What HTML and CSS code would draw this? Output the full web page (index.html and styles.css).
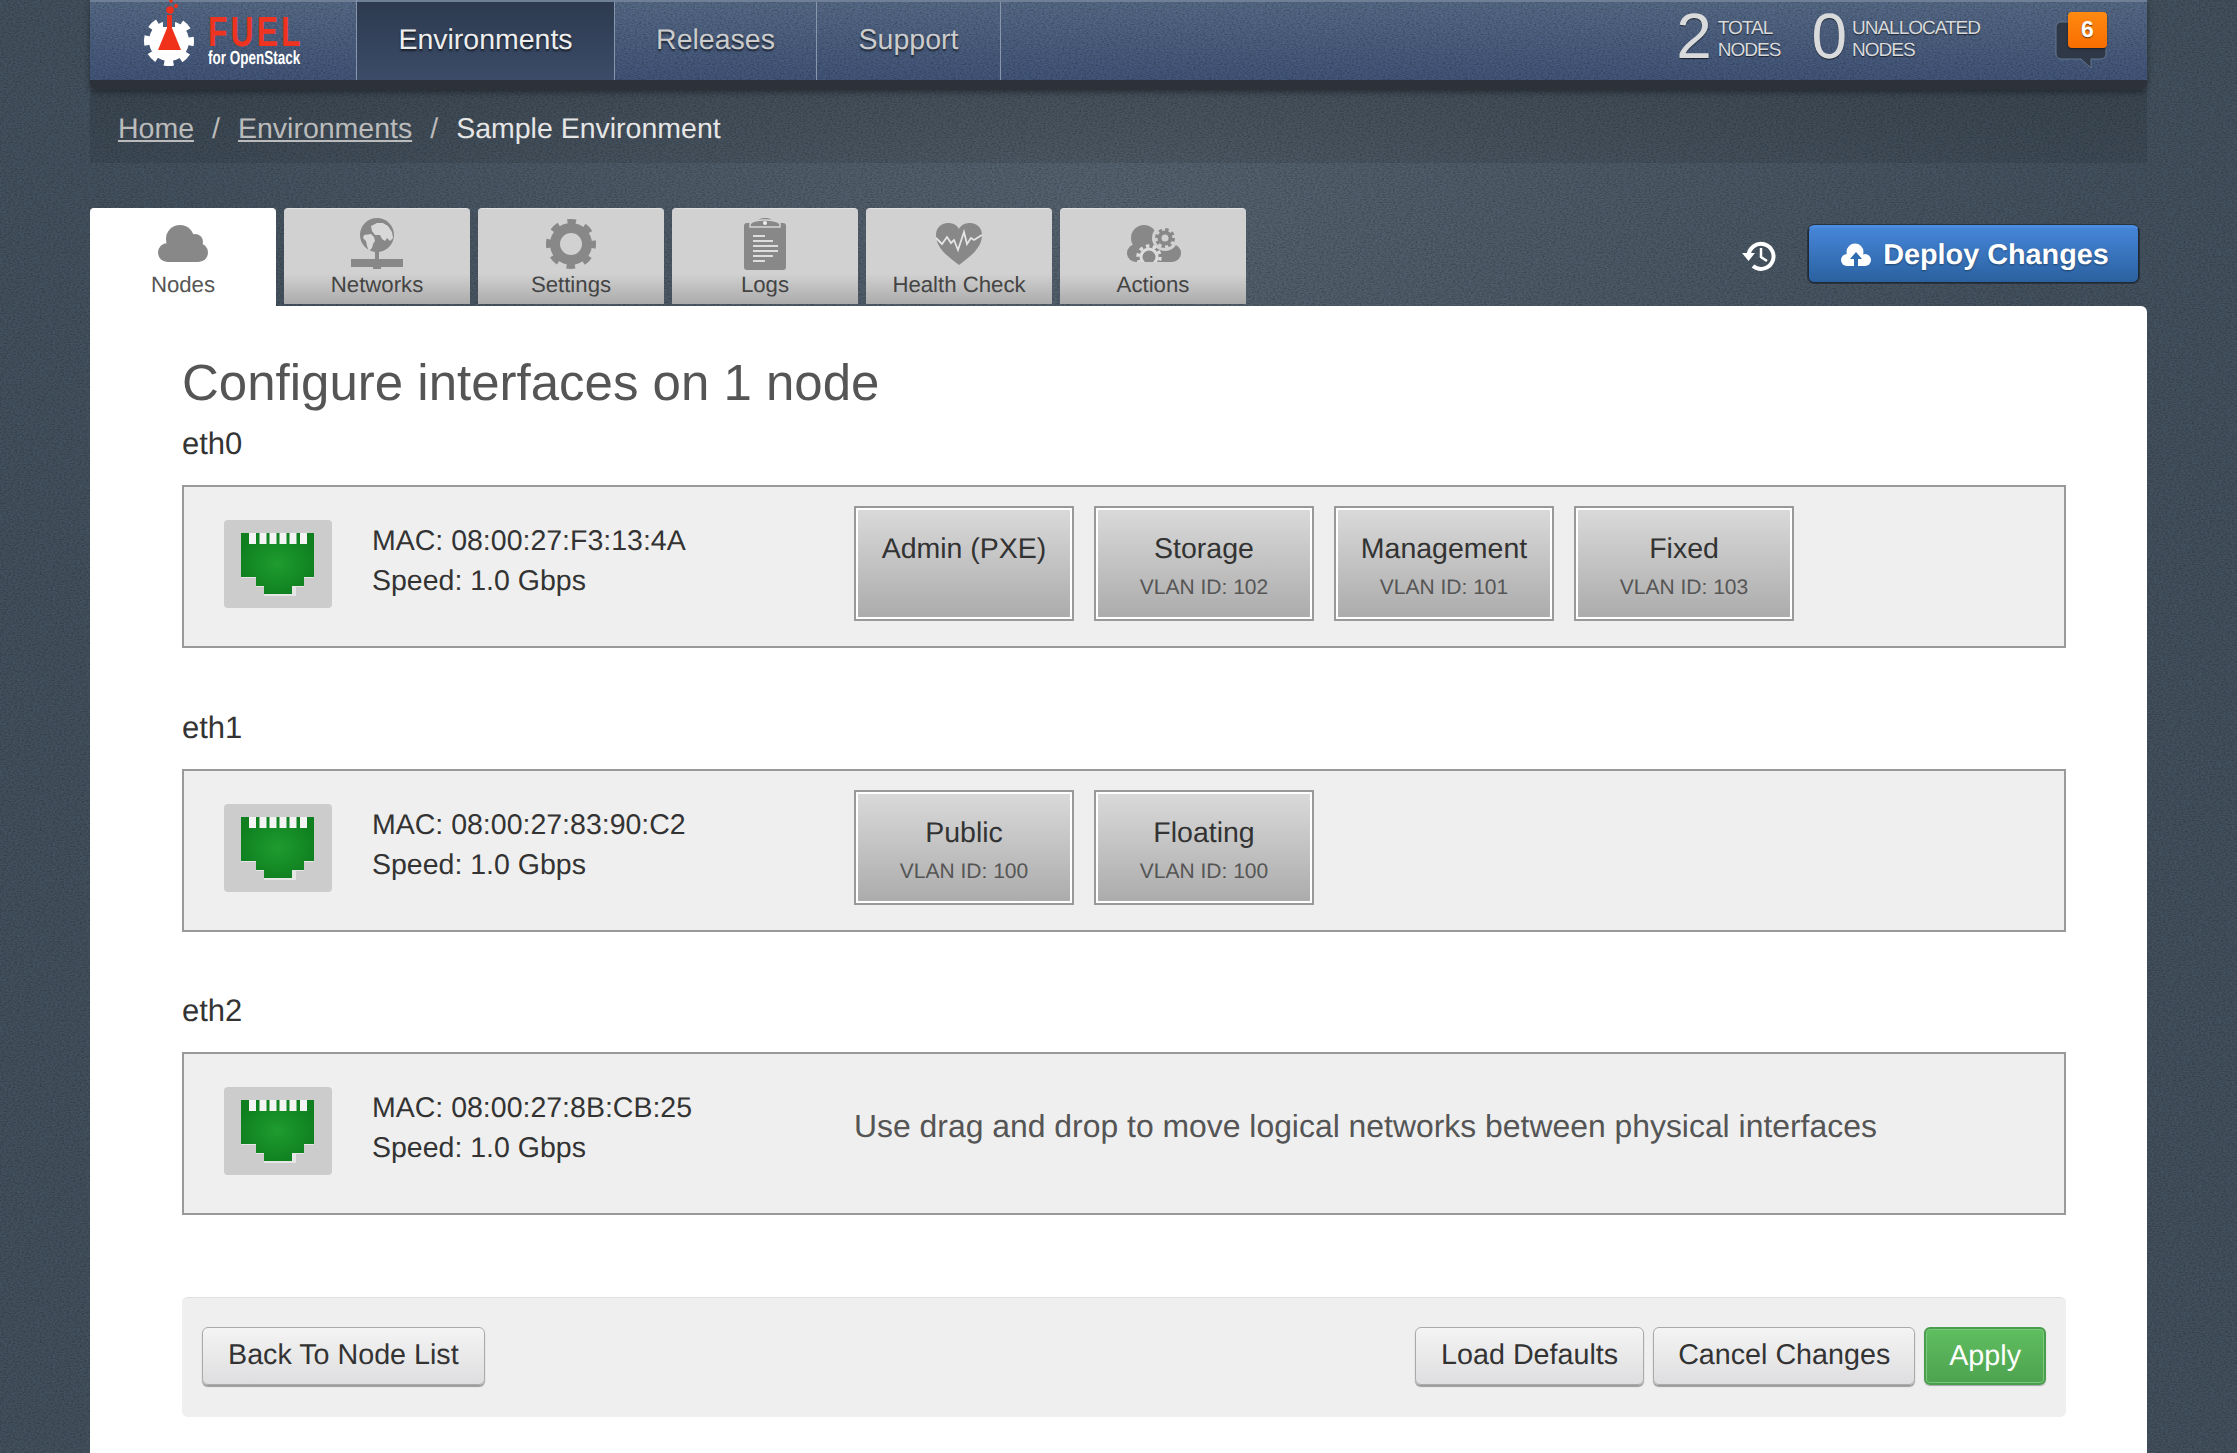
FILE: index.html
```html
<!DOCTYPE html>
<html>
<head>
    <meta charset="utf-8">
    <title>Fuel for OpenStack</title>
    <link rel="stylesheet" href="styles.css">
</head>
<body>
<div id="page">
    <div id="navbar">
        <div class="brand">
            <svg class="brand-gear" width="56" height="66" viewBox="0 0 56 66">
                <circle cx="28" cy="41" r="20" fill="#fff"/>
                <circle cx="28" cy="41" r="21" fill="none" stroke="#fff" stroke-width="8" stroke-dasharray="9 7.490" stroke-dashoffset="4.500"/>
                <path d="M22 16h12v11h-12z" fill="#4d6180"/>
                <path d="M26 15h5v13l9 22H17l9-22z" fill="#f0321a"/>
                <circle cx="29" cy="10" r="3.800" fill="#f0321a"/>
                <circle cx="35" cy="6" r="2" fill="#f0321a"/>
                <circle cx="30" cy="1" r="1.800" fill="#f0321a"/>
            </svg>
            <div class="brand-text">
                <div class="brand-fuel">FUEL</div>
                <div class="brand-sub">for OpenStack</div>
            </div>
        </div>
        <a class="nav-item active nav-env">Environments</a>
        <a class="nav-item nav-rel">Releases</a>
        <a class="nav-item nav-sup">Support</a>
        <div class="stats">
            <div class="stat">
                <span class="stat-num">2</span>
                <span class="stat-label">TOTAL<br>NODES</span>
            </div>
            <div class="stat stat-free">
                <span class="stat-num">0</span>
                <span class="stat-label">UNALLOCATED<br>NODES</span>
            </div>
            <div class="notify">
                <svg width="54" height="50" viewBox="0 0 54 50">
                    <path d="M6 1h40a5 5 0 0 1 5 5v27a5 5 0 0 1-5 5H36v9L26 38H6a5 5 0 0 1-5-5V6a5 5 0 0 1 5-5z" fill="#2e3846" stroke="#64768e" stroke-width="1"/>
                </svg>
                <span class="badge">6</span>
            </div>
        </div>
    </div>

    <div id="breadcrumb">
        <a>Home</a><span class="sep">/</span><a>Environments</a><span class="sep">/</span><span class="here">Sample Environment</span>
    </div>

    <div id="tabs">
        <div class="tab active">
            <svg width="60" height="52" viewBox="0 0 60 52">
                <g fill="#888">
                    <circle cx="27" cy="21" r="14"/>
                    <circle cx="42" cy="24" r="8"/>
                    <circle cx="14.500" cy="34.500" r="9.500"/>
                    <circle cx="45.500" cy="34.500" r="9.500"/>
                    <rect x="14" y="26" width="32" height="18"/>
                </g>
            </svg>
            <span>Nodes</span>
        </div>
        <div class="tab">
            <svg width="60" height="52" viewBox="0 0 60 52">
                <circle cx="30" cy="17" r="17" fill="#888"/>
                <path d="M24 8l6-3h6l5 3 4 6 1 6-3 3-3-3-2 3-3-2-2-4h-5l-3-4z" fill="#d8d8d8"/>
                <path d="M17 17l7-1 3 3 1 4-2 3-1 4-3 3-2-5-1-5-3-3z" fill="#d8d8d8"/>
                <path d="M28 33h4v10h-4z" fill="#888"/>
                <path d="M4 41h52v8H34v2h-8v-2H4z" fill="#888"/>
            </svg>
            <span>Networks</span>
        </div>
        <div class="tab">
            <svg width="60" height="52" viewBox="0 0 60 52">
                <circle cx="30" cy="26" r="16" fill="none" stroke="#888" stroke-width="10"/>
                <circle cx="30" cy="26" r="22" fill="none" stroke="#888" stroke-width="6" stroke-dasharray="8.500 8.780" stroke-dashoffset="4.250"/>
            </svg>
            <span>Settings</span>
        </div>
        <div class="tab">
            <svg width="60" height="52" viewBox="0 0 60 52">
                <path d="M12 5h9c1-3 4-5 9-5s8 2 9 5h9a3 3 0 0 1 3 3v41a3 3 0 0 1-3 3H12a3 3 0 0 1-3-3V8a3 3 0 0 1 3-3z" fill="#888"/>
                <path d="M15 6c2-3 7-4 15-4s13 1 15 4v3H15z" fill="#888" stroke="#d4d4d4" stroke-width="1.500"/>
                <circle cx="30" cy="5" r="2" fill="#eee"/>
                <path d="M18 18h12M18 23h20M18 28h25M18 33h25M18 38h20M18 43h12" stroke="#ddd" stroke-width="2.200" fill="none"/>
            </svg>
            <span>Logs</span>
        </div>
        <div class="tab">
            <svg width="60" height="52" viewBox="0 0 60 52">
                <path d="M30 47C15 36 7 28 7 17 7 9 13 5 19 5c5 0 9 2 11 6 2-4 6-6 11-6 6 0 12 4 12 12 0 11-8 19-23 30z" fill="#888"/>
                <path d="M7 20l6 6 5-7 4 6 3-3 4 10 6-18 3 12 4-6 3 2 8-5" fill="none" stroke="#e4e4e4" stroke-width="1.800"/>
            </svg>
            <span>Health Check</span>
        </div>
        <div class="tab">
            <svg width="60" height="52" viewBox="0 0 60 52">
                <g fill="#888">
                    <circle cx="21" cy="20" r="13"/>
                    <circle cx="42" cy="27" r="9"/>
                    <circle cx="13" cy="35" r="9"/>
                    <circle cx="49" cy="35" r="9"/>
                    <rect x="13" y="26" width="36" height="18"/>
                </g>
                <circle cx="42" cy="20" r="13" fill="#d1d1d1"/>
                <circle cx="42" cy="20" r="8" fill="none" stroke="#888" stroke-width="4" stroke-dasharray="3.200 3.080"/>
                <circle cx="42" cy="20" r="5.500" fill="none" stroke="#888" stroke-width="4"/>
                <circle cx="26" cy="39" r="8" fill="none" stroke="#dcdcdc" stroke-width="3"/>
                <circle cx="26" cy="39" r="11" fill="none" stroke="#dcdcdc" stroke-width="3.500" stroke-dasharray="3.500 3.410"/>
                <rect x="8" y="44" width="46" height="8" fill="#d1d1d1"/>
            </svg>
            <span>Actions</span>
        </div>
        <div class="tab-tools">
            <svg class="history" width="36" height="32" viewBox="0 0 36 32">
                <path d="M7.500 16a12.500 12.500 0 1 1 4.500 10" fill="none" stroke="#fff" stroke-width="4"/>
                <path d="M1 13h13l-6.500 8z" fill="#fff"/>
                <path d="M20 8v9l6 4" fill="none" stroke="#fff" stroke-width="2.500"/>
            </svg>
            <a class="deploy">
                <svg width="30" height="24" viewBox="0 0 30 24">
                    <g fill="#fff">
                        <circle cx="14" cy="9" r="8.500"/>
                        <circle cx="24" cy="17" r="6"/>
                        <circle cx="6" cy="17" r="6"/>
                        <rect x="6" y="12" width="18" height="11"/>
                    </g>
                    <path d="M15 9l6 7h-4v7h-4v-7H9z" fill="#2f6cb0"/>
                </svg>
                Deploy Changes
            </a>
        </div>
    </div>

    <div id="panel">
        <h1>Configure interfaces on 1 node</h1>

        <div class="iface-name">eth0</div>
        <div class="iface">
            <div class="port">
                <svg width="108" height="88" viewBox="0 0 108 88"><use href="#rj45"/></svg>
            </div>
            <div class="iface-info">MAC: 08:00:27:F3:13:4A<br>Speed: 1.0 Gbps</div>
            <div class="chips">
                <div class="chip"><div class="chip-name">Admin (PXE)</div></div>
                <div class="chip"><div class="chip-name">Storage</div><div class="chip-vlan">VLAN ID: 102</div></div>
                <div class="chip"><div class="chip-name">Management</div><div class="chip-vlan">VLAN ID: 101</div></div>
                <div class="chip"><div class="chip-name">Fixed</div><div class="chip-vlan">VLAN ID: 103</div></div>
            </div>
        </div>

        <div class="iface-name">eth1</div>
        <div class="iface">
            <div class="port">
                <svg width="108" height="88" viewBox="0 0 108 88"><use href="#rj45"/></svg>
            </div>
            <div class="iface-info">MAC: 08:00:27:83:90:C2<br>Speed: 1.0 Gbps</div>
            <div class="chips">
                <div class="chip"><div class="chip-name">Public</div><div class="chip-vlan">VLAN ID: 100</div></div>
                <div class="chip"><div class="chip-name">Floating</div><div class="chip-vlan">VLAN ID: 100</div></div>
            </div>
        </div>

        <div class="iface-name">eth2</div>
        <div class="iface">
            <div class="port">
                <svg width="108" height="88" viewBox="0 0 108 88"><use href="#rj45"/></svg>
            </div>
            <div class="iface-info">MAC: 08:00:27:8B:CB:25<br>Speed: 1.0 Gbps</div>
            <div class="hint">Use drag and drop to move logical networks between physical interfaces</div>
        </div>

        <div class="page-controls">
            <a class="btn">Back To Node List</a>
            <div class="controls-right">
                <a class="btn">Load Defaults</a>
                <a class="btn btn-cancel">Cancel Changes</a>
                <a class="btn btn-apply">Apply</a>
            </div>
        </div>
    </div>
</div>

<svg class="defs" width="0" height="0">
    <defs>
        <radialGradient id="rjgreen" cx="50%" cy="50%" r="55%">
            <stop offset="0" stop-color="#1e9c2e"/>
            <stop offset="1" stop-color="#0f7f20"/>
        </radialGradient>
        <g id="rj45">
            <path d="M17 14h73v44h-10v9H72v9H40v-9H32v-9H17z" fill="#e6e6e6"/>
            <path d="M17 13h73v44h-10v9H68v8H40v-8H32v-9H17z" fill="url(#rjgreen)"/>
            <path d="M25 13h7v11h-7zM35.500 13h7v11h-7zM45.500 13h7v11h-7zM55.500 13h7v11h-7zM65.500 13h7v11h-7zM76 13h7v11h-7z" fill="#f4f4f4"/>
        </g>
    </defs>
</svg>
</body>
</html>
```

FILE: styles.css
```css
:root {
    --noise: url("data:image/svg+xml,%3Csvg xmlns='http://www.w3.org/2000/svg' width='256' height='256'%3E%3Cfilter id='n'%3E%3CfeTurbulence type='fractalNoise' baseFrequency='.45 .8' numOctaves='2' seed='4' stitchTiles='stitch'/%3E%3CfeColorMatrix values='0 0 0 0 0 0 0 0 0 0 0 0 0 0 0 .5 0 0 0 -.18'/%3E%3C/filter%3E%3Crect width='256' height='256' filter='url(%23n)'/%3E%3C/svg%3E");
}

html, body {
    margin: 0;
    height: 100%;
}

body {
    font-family: "Liberation Sans", Arial, sans-serif;
    text-rendering: geometricPrecision;
    color: #333;
    overflow: hidden;
    background-color: #3f4e5b;
    background-image: var(--noise), radial-gradient(ellipse 60% 45% at 50% 14%, #566370, #44525f 70%, #43515e);
}

a {
    cursor: pointer;
}

#page {
    width: 2057px;
    height: 100%;
    margin-left: 90px;
    display: flex;
    flex-direction: column;
}

.defs {
    display: block;
    height: 0;
}

/* top bar */
#navbar {
    height: 78px;
    display: flex;
    flex: none;
    border-top: 2px solid #6f7f95;
    border-bottom: 10px solid #2d3139;
    border-radius: 0 0 6px 6px;
    background-image: var(--noise), linear-gradient(#566a87, #42557a);
    box-shadow: 0 2px 6px rgba(0, 0, 0, .4);
    color: #ccc;
}

.brand {
    width: 267px;
    flex: none;
    box-sizing: border-box;
    padding-left: 51px;
    display: flex;
    border-right: 1px solid #8796aa;
    margin-top: -2px;
}

.brand-gear {
    flex: none;
}

.brand-text {
    margin-left: 11px;
    color: #fff;
}

.brand-fuel {
    margin-top: 12px;
    font-size: 42px;
    line-height: 39px;
    font-weight: bold;
    color: #ee3420;
    letter-spacing: 4px;
    transform: scaleX(.76);
    transform-origin: left;
}

.brand-sub {
    font-size: 19px;
    line-height: 16px;
    font-weight: bold;
    transform: scaleX(.71);
    transform-origin: left;
    white-space: nowrap;
}

.nav-item {
    box-sizing: border-box;
    flex: none;
    font-size: 28.500px;
    line-height: 77px;
    text-align: center;
    border-right: 1px solid #8796aa;
    text-shadow: 0 2px 2px rgba(0, 0, 0, .6);
}

.nav-env { width: 258px; }
.nav-rel { width: 202px; }
.nav-sup { width: 184px; }

.nav-item.active {
    color: #eee;
    background: linear-gradient(#2d3a4f, #3b4c68);
}

.stats {
    margin-left: auto;
    padding-right: 40px;
    display: flex;
    align-items: flex-start;
    color: #d8dadc;
    text-shadow: 0 1px 1px rgba(0, 0, 0, .6);
}

.stat {
    display: flex;
}

.stat-num {
    font-size: 64px;
    line-height: 64px;
    margin-top: 2px;
}

.stat-label {
    font-size: 19px;
    line-height: 22px;
    margin: 16px 0 0 6px;
    letter-spacing: -1px;
}

.stat-free {
    margin-left: 31px;
}

.stat-free .stat-label {
    margin-left: 5px;
}

.notify {
    position: relative;
    width: 52px;
    height: 68px;
    margin: 19px 0 0 75px;
}

.badge {
    position: absolute;
    left: 13px;
    top: -9px;
    width: 39px;
    height: 36px;
    border-radius: 4px;
    background: linear-gradient(#ff8a12, #f76d00);
    box-shadow: 0 1px 2px rgba(0, 0, 0, .5);
    color: #fff;
    font-size: 23px;
    line-height: 34px;
    font-weight: bold;
    text-align: center;
}

/* breadcrumb */
#breadcrumb {
    height: 73px;
    flex: none;
    box-sizing: border-box;
    padding-left: 28px;
    font-size: 28.500px;
    line-height: 78px;
    color: #bbb;
    background: linear-gradient(rgba(0, 0, 0, .14), rgba(0, 0, 0, .09));
}

#breadcrumb a {
    text-decoration: underline;
}

.sep {
    margin: 0 18px;
}

.here {
    color: #e6e6e6;
}

/* tabs */
#tabs {
    display: flex;
    flex: none;
    height: 98px;
    margin-top: 45px;
    gap: 8px;
}

.tab {
    width: 186px;
    height: 96px;
    box-sizing: border-box;
    padding-top: 9px;
    border-radius: 4px 4px 0 0;
    border-top: 1px solid #e2e2e2;
    background: linear-gradient(#d1d1d1 0, #d1d1d1 68%, #ababab 100%);
    text-align: center;
    font-size: 22.200px;
    color: #444;
}

.tab svg {
    display: block;
    margin: 0 auto;
}

.tab span {
    display: block;
    margin-top: 2px;
    line-height: 26px;
}

.tab.active {
    height: 99px;
    background: #fff;
    border-top-color: #fff;
    color: #555;
}

.tab-tools {
    margin-left: auto;
    padding: 17px 8px 0 0;
    display: flex;
    align-items: flex-start;
}

.history {
    margin: 15px 31px 0 0;
}

.deploy {
    width: 331px;
    height: 58px;
    box-sizing: border-box;
    padding-left: 3px;
    display: flex;
    align-items: center;
    justify-content: center;
    gap: 12px;
    border-radius: 6px;
    border: 1px solid #1f2833;
    border-top: 3px solid #4a8ce0;
    outline: 1px solid #2a3440;
    background: linear-gradient(#4685d8, #2a619f);
    color: #fff;
    font-size: 28.800px;
    font-weight: bold;
    text-shadow: 0 1px 2px rgba(0, 0, 0, .4);
}

/* main panel */
#panel {
    flex: 1;
    box-sizing: border-box;
    padding: 1px 81px 0 92px;
    background: #fff;
    border-radius: 0 6px 0 0;
}

h1 {
    margin: 46px 0 11px;
    font-size: 51px;
    line-height: 60px;
    font-weight: normal;
    color: #555;
}

.iface-name {
    font-size: 31px;
    line-height: 40px;
}

.iface {
    box-sizing: border-box;
    height: 163px;
    margin: 21px 0 59.500px;
    padding-left: 40px;
    display: flex;
    align-items: flex-start;
    border: 2px solid #999;
    background: #efefef;
}

.port {
    flex: none;
    width: 108px;
    height: 88px;
    margin-top: 33px;
    border-radius: 4px;
    background: #ccc;
}

.port svg {
    display: block;
}

.iface-info {
    flex: none;
    width: 482px;
    box-sizing: border-box;
    margin-left: 40px;
    padding-top: 34px;
    font-size: 28.500px;
    line-height: 40px;
}

.chips {
    display: flex;
    gap: 20px;
    padding-top: 19px;
}

.chip {
    width: 220px;
    height: 115px;
    box-sizing: border-box;
    padding-top: 23px;
    border: 2px solid #999;
    outline: 2px solid #fff;
    outline-offset: -4px;
    background: linear-gradient(#dadada, #ababab);
    text-align: center;
}

.chip-name {
    font-size: 28.500px;
    line-height: 36px;
}

.chip-vlan {
    margin-top: 8px;
    font-size: 21px;
    line-height: 26px;
    color: #555;
}

.hint {
    padding-top: 54px;
    font-size: 31.900px;
    line-height: 36px;
    color: #555;
}

/* buttons at the bottom */
.page-controls {
    height: 120px;
    box-sizing: border-box;
    margin-top: 82px;
    padding: 29px 20px 0 20px;
    display: flex;
    justify-content: space-between;
    border-radius: 6px;
    border-top: 1px solid #e0e0e0;
    background: #efefef;
}

.controls-right {
    display: flex;
    gap: 9px;
}

.btn {
    height: 58px;
    box-sizing: border-box;
    padding: 0 25px;
    border: 1px solid #aaa;
    border-radius: 6px;
    background: linear-gradient(#f4f4f4, #dedee0);
    box-shadow: 0 2px 1px rgba(0, 0, 0, .35);
    font-size: 28.700px;
    line-height: 54px;
    color: #333;
}

.btn-cancel {
    padding: 0 24px;
}

.btn-apply {
    border: 2px solid #4a9d4c;
    background: linear-gradient(#5fbe60, #4ea24f);
    box-shadow: inset 0 0 0 1px #79c97a, 0 1px 1px rgba(0, 0, 0, .3);
    padding: 0 23px;
    color: #fff;
}
```
